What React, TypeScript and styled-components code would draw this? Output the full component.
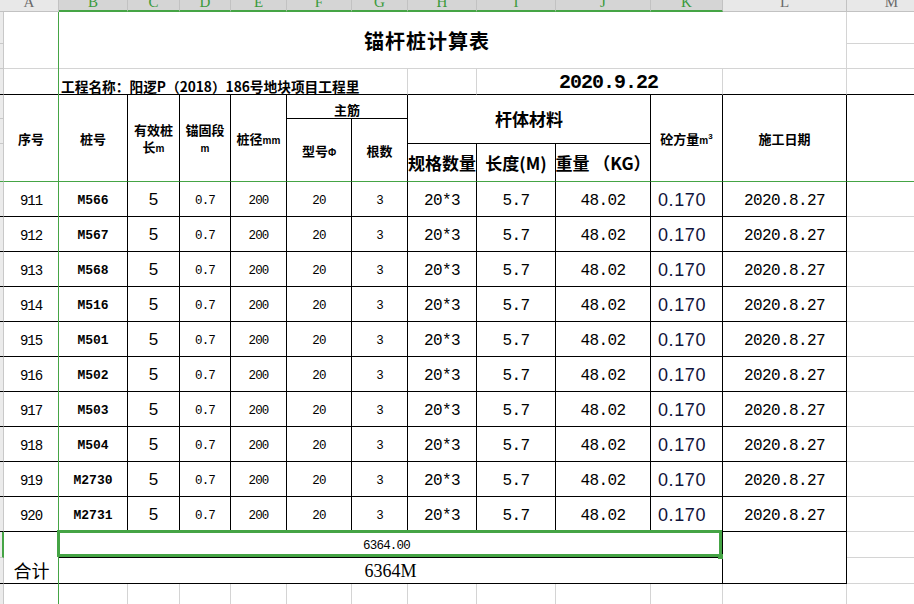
import React from "react";
import styled, { createGlobalStyle } from "styled-components";

const GREEN = "#45a445";
const GRID = "#d4d4d4";
const INK = "#000";
const STUB = "#c8c8c8";

const Global = createGlobalStyle`
  html, body { margin: 0; padding: 0; background: #fff; }
  body { font-family: "Noto Sans CJK SC", "Liberation Sans", sans-serif; overflow: hidden; }
  * { box-sizing: border-box; }
`;

const Sheet = styled.div`
  width: 914px;
  height: 604px;
  overflow: hidden;
  background: #fff;
  display: flex;
  flex-direction: column;
`;

const HCOLS = "59px 69px 52px 51px 56px 65px 56px 69px 79px 95px 72px 124px 90px";
const BCOLS = "4px 55px 69px 52px 51px 56px 65px 56px 69px 79px 95px 72px 124px 90px";

const ColHeader = styled.div`
  display: grid;
  grid-template-columns: ${HCOLS};
  height: 12px;
  flex: none;
`;

const ColLetter = styled.div<{ $sel?: boolean }>`
  height: 12px;
  overflow: hidden;
  display: flex;
  justify-content: center;
  align-items: flex-start;
  background: ${(p) => (p.$sel ? "#d5d5d5" : "#e8e8e8")};
  border-right: 1px solid #c2c2c2;
  border-bottom: ${(p) => (p.$sel ? `2px solid ${GREEN}` : "1px solid #c2c2c2")};
  color: ${(p) => (p.$sel ? "#3a9a3a" : "#6a6a6a")};
  font: 15px/15px "Liberation Serif", serif;
  span {
    margin-top: -5px;
  }
`;

const Body = styled.div`
  position: relative;
  display: grid;
  grid-template-columns: ${BCOLS};
  grid-template-rows: 32px 25px 26px 24px 25px 38px repeat(10, 35px) 26px 26px 26px;
  flex: none;
`;

const FrozenLine = styled.div`
  position: absolute;
  left: 58px;
  top: 0;
  bottom: 0;
  width: 1px;
  background: ${GREEN};
  z-index: 1;
`;

const Stub = styled.div<{ $r: number; $bb: string; $sel?: boolean }>`
  grid-column: 1;
  grid-row: ${(p) => p.$r};
  background: #ebebeb;
  border-right: ${(p) => (p.$sel ? `2px solid ${GREEN}` : `1px solid ${STUB}`)};
  border-bottom: 1px solid ${(p) => p.$bb};
`;

type CellProps = {
  $c: string;
  $r: string;
  $rb?: string;
  $bb?: string;
  $ai?: string;
  $jc?: string;
};

const Cell = styled.div<CellProps>`
  position: relative;
  grid-column: ${(p) => p.$c};
  grid-row: ${(p) => p.$r};
  display: flex;
  align-items: ${(p) => p.$ai ?? "center"};
  justify-content: ${(p) => p.$jc ?? "center"};
  border-right: 1px solid ${(p) => p.$rb ?? GRID};
  border-bottom: 1px solid ${(p) => p.$bb ?? GRID};
  min-width: 0;
  overflow: visible;
  white-space: nowrap;
`;

const Title = styled.span`
  font-size: 20px;
  font-weight: 700;
  letter-spacing: 1px;
  color: #000;
  padding-left: 4px;
`;

const Project = styled.span`
  font-size: 13.7px;
  font-weight: 700;
  line-height: 16px;
  padding-left: 2px;
  color: #000;
`;

const DateText = styled.span`
  font: bold 20px/20px "Liberation Mono", monospace;
  letter-spacing: -1px;
  color: #000;
  padding-left: 82px;
  padding-bottom: 1px;
`;

const HeadLabel = styled.span<{ $big?: boolean }>`
  font-size: ${(p) => (p.$big ? "17px" : "13px")};
  font-weight: 700;
  line-height: ${(p) => (p.$big ? "20px" : "17px")};
  text-align: center;
  color: #000;
`;

const Unit = styled.span`
  font: bold 10px "Liberation Sans", sans-serif;
  vertical-align: baseline;
`;

const Sup = styled.sup`
  font: bold 8px "Liberation Sans", sans-serif;
  vertical-align: 5px;
`;

type Variant = "seq" | "pile" | "len" | "small" | "mid" | "vol" | "sum" | "total";

const fonts: Record<Variant, string> = {
  seq: `font: 14px "Liberation Mono", monospace; letter-spacing: -1.1px; padding-top: 3px;`,
  pile: `font: bold 13px "Liberation Mono", monospace; padding-top: 3px;`,
  len: `font: 17px "Liberation Sans", sans-serif; padding-top: 2px;`,
  small: `font: 12.5px "Liberation Mono", monospace; letter-spacing: -0.8px; padding-top: 3px;`,
  mid: `font: 16px "Liberation Mono", monospace; letter-spacing: -0.6px; padding-top: 3px;`,
  vol: `font: 18px "Liberation Sans", sans-serif; letter-spacing: 0.6px; color: #10123a; padding-right: 9px; padding-top: 3px;`,
  sum: `font: 12.5px "Liberation Mono", monospace; letter-spacing: -0.8px; padding-right: 8px; padding-top: 2px;`,
  total: `font: 18px "Liberation Serif", serif; padding-top: 2px;`,
};

const Num = styled.span<{ $v: Variant }>`
  color: #000;
  line-height: 1;
  ${(p) => fonts[p.$v]}
`;

const SumLabel = styled.span`
  font-size: 18px;
  line-height: 22px;
  color: #000;
  padding-left: 1px;
  padding-bottom: 2px;
`;

const Selection = styled.div`
  position: absolute;
  left: -2px;
  top: -2px;
  right: 0;
  bottom: 0;
  border: 3px solid ${GREEN};
  z-index: 2;
  pointer-events: none;
`;

const Handle = styled.div`
  position: absolute;
  right: -1px;
  bottom: -2px;
  width: 5px;
  height: 5px;
  background: ${GREEN};
  z-index: 3;
`;

const LETTERS = ["A", "B", "C", "D", "E", "F", "G", "H", "I", "J", "K", "L", "M"];

const DATA: [string, string][] = [
  ["911", "M566"],
  ["912", "M567"],
  ["913", "M568"],
  ["914", "M516"],
  ["915", "M501"],
  ["916", "M502"],
  ["917", "M503"],
  ["918", "M504"],
  ["919", "M2730"],
  ["920", "M2731"],
];

const stubBorder = (r: number) => {
  if (r === 6) return GREEN;
  if (r === 3 || (r >= 7 && r <= 16) || r === 18) return INK;
  if (r === 19) return "transparent";
  return STUB;
};

export default function App() {
  return (
    <>
      <Global />
      <Sheet>
        <ColHeader>
          {LETTERS.map((l, i) => (
            <ColLetter key={l} $sel={i >= 1 && i <= 10}>
              <span>{l}</span>
            </ColLetter>
          ))}
        </ColHeader>
        <Body>
          {Array.from({ length: 19 }, (_, i) => (
            <Stub key={`s${i}`} $r={i + 1} $bb={stubBorder(i + 1)} $sel={i + 1 === 17} />
          ))}

          {/* title rows */}
          <Cell $c="2 / 14" $r="1 / 3">
            <Title>锚杆桩计算表</Title>
          </Cell>
          <Cell $c="14" $r="1" $rb="transparent" />
          <Cell $c="14" $r="2" $rb="transparent" />

          {/* project row */}
          <Cell $c="2" $r="3" $bb={INK} />
          <Cell $c="3 / 9" $r="3" $bb={INK} $ai="flex-end" $jc="flex-start">
            <Project>工程名称：阳逻P（2018）186号地块项目工程里</Project>
          </Cell>
          <Cell $c="9" $r="3" $bb={INK} />
          <Cell $c="10 / 13" $r="3" $bb={INK} $ai="flex-end" $jc="flex-start">
            <DateText>2020.9.22</DateText>
          </Cell>
          <Cell $c="13" $r="3" $bb={INK} />
          <Cell $c="14" $r="3" $bb={INK} $rb="transparent" />

          {/* table header */}
          <Cell $c="2" $r="4 / 7" $rb={INK} $bb={GREEN}>
            <HeadLabel>序号</HeadLabel>
          </Cell>
          <Cell $c="3" $r="4 / 7" $rb={INK} $bb={GREEN}>
            <HeadLabel>桩号</HeadLabel>
          </Cell>
          <Cell $c="4" $r="4 / 7" $rb={INK} $bb={GREEN}>
            <HeadLabel>
              有效桩
              <br />长<Unit>m</Unit>
            </HeadLabel>
          </Cell>
          <Cell $c="5" $r="4 / 7" $rb={INK} $bb={GREEN}>
            <HeadLabel>
              锚固段
              <br />
              <Unit>m</Unit>
            </HeadLabel>
          </Cell>
          <Cell $c="6" $r="4 / 7" $rb={INK} $bb={GREEN}>
            <HeadLabel>
              桩径<Unit>mm</Unit>
            </HeadLabel>
          </Cell>
          <Cell $c="7 / 9" $r="4" $rb={INK} $bb={INK} $ai="flex-end">
            <HeadLabel>主筋</HeadLabel>
          </Cell>
          <Cell $c="7" $r="5 / 7" $rb={INK} $bb={GREEN}>
            <HeadLabel>
              型号<Unit>Φ</Unit>
            </HeadLabel>
          </Cell>
          <Cell $c="8" $r="5 / 7" $rb={INK} $bb={GREEN}>
            <HeadLabel>根数</HeadLabel>
          </Cell>
          <Cell $c="9 / 12" $r="4 / 6" $rb={INK} $bb={INK}>
            <HeadLabel $big>杆体材料</HeadLabel>
          </Cell>
          <Cell $c="9" $r="6" $rb={INK} $bb={GREEN}>
            <HeadLabel $big>规格数量</HeadLabel>
          </Cell>
          <Cell $c="10" $r="6" $rb={INK} $bb={GREEN}>
            <HeadLabel $big>长度(M)</HeadLabel>
          </Cell>
          <Cell $c="11" $r="6" $rb={INK} $bb={GREEN}>
            <HeadLabel $big>重量 （KG）</HeadLabel>
          </Cell>
          <Cell $c="12" $r="4 / 7" $rb={INK} $bb={GREEN}>
            <HeadLabel>
              砼方量<Unit>m</Unit>
              <Sup>3</Sup>
            </HeadLabel>
          </Cell>
          <Cell $c="13" $r="4 / 7" $rb={INK} $bb={GREEN}>
            <HeadLabel>施工日期</HeadLabel>
          </Cell>
          <Cell $c="14" $r="4 / 7" $rb="transparent" $bb={GREEN} />

          {/* data rows */}
          {DATA.map(([seq, pile], i) => {
            const r = String(7 + i);
            return (
              <React.Fragment key={seq}>
                <Cell $c="2" $r={r} $rb={INK} $bb={INK}>
                  <Num $v="seq">{seq}</Num>
                </Cell>
                <Cell $c="3" $r={r} $rb={INK} $bb={INK}>
                  <Num $v="pile">{pile}</Num>
                </Cell>
                <Cell $c="4" $r={r} $rb={INK} $bb={INK}>
                  <Num $v="len">5</Num>
                </Cell>
                <Cell $c="5" $r={r} $rb={INK} $bb={INK}>
                  <Num $v="small">0.7</Num>
                </Cell>
                <Cell $c="6" $r={r} $rb={INK} $bb={INK}>
                  <Num $v="small">200</Num>
                </Cell>
                <Cell $c="7" $r={r} $rb={INK} $bb={INK}>
                  <Num $v="small">20</Num>
                </Cell>
                <Cell $c="8" $r={r} $rb={INK} $bb={INK}>
                  <Num $v="small">3</Num>
                </Cell>
                <Cell $c="9" $r={r} $rb={INK} $bb={INK}>
                  <Num $v="mid">20*3</Num>
                </Cell>
                <Cell $c="10" $r={r} $rb={INK} $bb={INK}>
                  <Num $v="mid">5.7</Num>
                </Cell>
                <Cell $c="11" $r={r} $rb={INK} $bb={INK}>
                  <Num $v="mid">48.02</Num>
                </Cell>
                <Cell $c="12" $r={r} $rb={INK} $bb={INK}>
                  <Num $v="vol">0.170</Num>
                </Cell>
                <Cell $c="13" $r={r} $rb={INK} $bb={INK}>
                  <Num $v="mid">2020.8.27</Num>
                </Cell>
                <Cell $c="14" $r={r} $rb="transparent" />
              </React.Fragment>
            );
          })}

          {/* totals */}
          <Cell $c="2" $r="17 / 19" $rb={INK} $bb={INK} $ai="flex-end">
            <SumLabel>合计</SumLabel>
          </Cell>
          <Cell $c="3 / 13" $r="17" $rb={INK} $bb={INK}>
            <Num $v="sum">6364.00</Num>
            <Selection />
            <Handle />
          </Cell>
          <Cell $c="3 / 13" $r="18" $rb={INK} $bb={INK}>
            <Num $v="total">6364M</Num>
          </Cell>
          <Cell $c="13" $r="17 / 19" $rb={INK} $bb={INK} />
          <Cell $c="14" $r="17" $rb="transparent" />
          <Cell $c="14" $r="18" $rb="transparent" />

          {/* empty trailing row */}
          {LETTERS.map((l, i) => (
            <Cell key={`e${l}`} $c={String(i + 2)} $r="19" $bb="transparent" />
          ))}

          <FrozenLine />
        </Body>
      </Sheet>
    </>
  );
}
